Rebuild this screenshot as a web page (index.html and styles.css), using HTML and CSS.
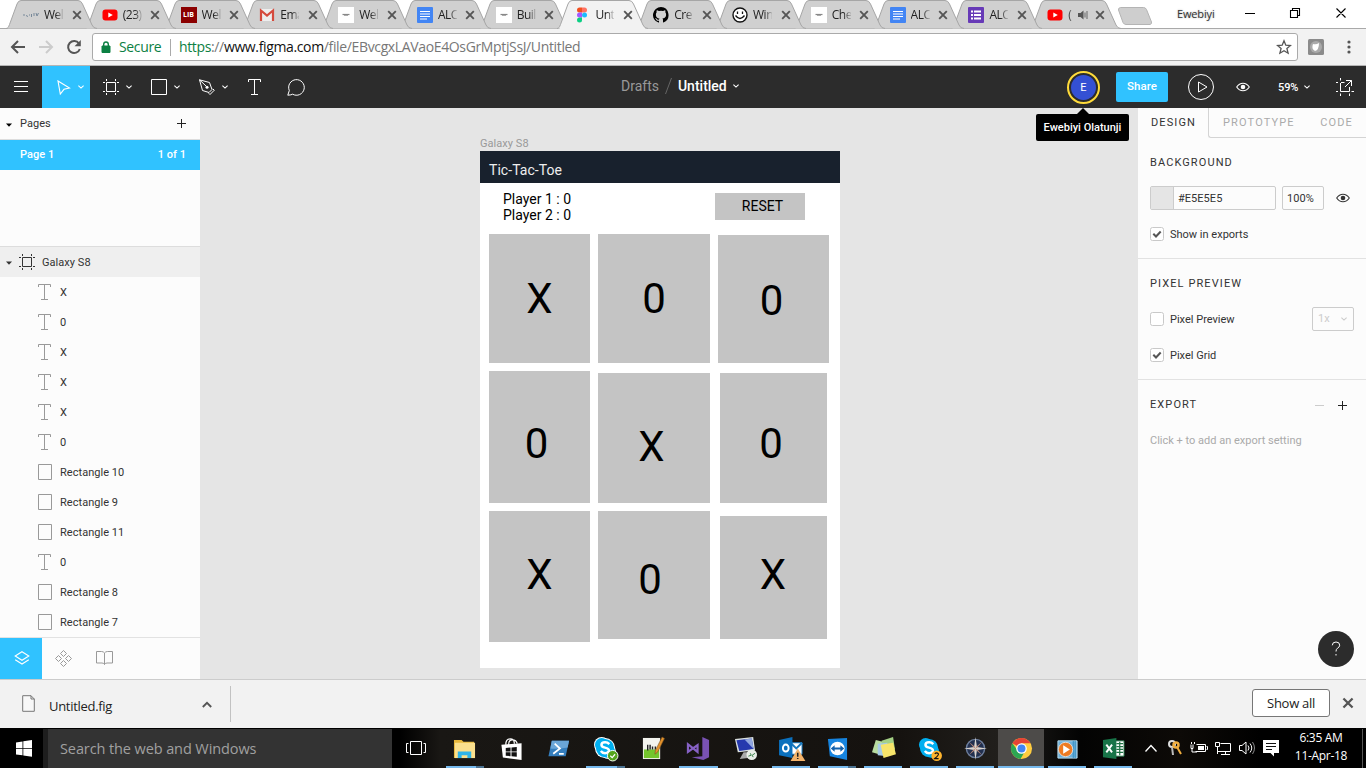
FILE: index.html
```
<!DOCTYPE html>
<html lang="en">
<head>
<meta charset="utf-8">
<title>Untitled</title>
<link rel="stylesheet" href="styles.css">
</head>
<body>
<svg class="defs" width="0" height="0">
  <symbol id="tab" viewBox="0 0 92 29"><path d="M0 28.5C2 28.5 2.500 27 3.500 24.500L11 4Q12.300.5 15 .5H72Q75 .5 76.500 4L86 25Q87.500 28.500 91 28.500"/></symbol>
  <symbol id="x" viewBox="0 0 10 10"><path d="M1.200 1.200l7.600 7.600M8.800 1.200L1.200 8.800" fill="none" stroke="#555" stroke-width="1.900"/></symbol>
  <symbol id="yt" viewBox="0 0 16 16"><rect x=".5" y="2.500" width="15" height="11" rx="3" fill="#f00"/><path d="M6.300 5.500l4.500 2.500-4.500 2.500z" fill="#fff"/></symbol>
  <symbol id="docs" viewBox="0 0 16 16"><rect width="16" height="16" rx="1" fill="#4285f4"/><path d="M3 4.500h10M3 7h10M3 9.500h10M3 12h7" stroke="#fff" stroke-width="1.200"/></symbol>
  <symbol id="forms" viewBox="0 0 16 16"><rect width="16" height="16" rx="1" fill="#673ab7"/><path d="M3 4.500h2M3 8h2M3 11.500h2M6 4.500h7M6 8h7M6 11.500h7" stroke="#fff" stroke-width="2"/></symbol>
  <symbol id="page" viewBox="0 0 16 16"><rect width="16" height="16" fill="#fff"/><path d="M4.500 7.500h7" stroke="#888" stroke-width="1.200"/><path d="M6 8.500h4" stroke="#aaa" stroke-width="1"/></symbol>
  <symbol id="chev" viewBox="0 0 6 4"><path d="M.4.600L3 3.100 5.600.600" fill="none" stroke="currentColor" stroke-width="1.100"/></symbol>
  <symbol id="frame" viewBox="0 0 16 16"><path d="M3.500 3.500h9v9h-9zM3.500 0v2M12.500 0v2M3.500 14v2M12.500 14v2M0 3.500h2M0 12.500h2M14 3.500h2M14 12.500h2" fill="none" stroke="currentColor"/></symbol>
  <symbol id="type" viewBox="0 0 13 16"><path d="M.5 3V.500h12V3M6.500.500v15M3 15.500h7" fill="none" stroke="currentColor"/></symbol>
  <symbol id="rect" viewBox="0 0 14 16"><path d="M.5.500h13v15H.500z" fill="none" stroke="currentColor"/></symbol>
  <symbol id="eye" viewBox="0 0 14 10"><path d="M.7 5Q3.200 1.200 7 1.200T13.300 5Q10.800 8.800 7 8.800T.700 5z" fill="none" stroke="currentColor" stroke-width="1.100"/><circle cx="7" cy="5" r="2.300" fill="currentColor"/></symbol>
  <symbol id="check" viewBox="0 0 14 14"><rect x=".5" y=".5" width="13" height="13" rx="2" fill="#fff" stroke="#c9c9c9"/><path d="M3.300 6.700L6 9.500l4.700-5" fill="none" stroke="#555" stroke-width="2"/></symbol>
  <symbol id="uncheck" viewBox="0 0 14 14"><rect x=".5" y=".5" width="13" height="13" rx="2" fill="#fff" stroke="#c9c9c9"/></symbol>
  <symbol id="plus" viewBox="0 0 9 9"><path d="M4.500 0v9M0 4.500h9" stroke="#222" stroke-width="1"/></symbol>
  <symbol id="skype" viewBox="0 0 24 24"><circle cx="8" cy="8" r="7" fill="#00aff0"/><circle cx="15" cy="15" r="7" fill="#00aff0"/><circle cx="11.500" cy="11.500" r="9.500" fill="#00aff0"/><path d="M16 7.500Q14 5.500 11.500 5.600 7.800 5.700 7.800 8.300q0 2 3.700 2.800 4.300.9 4.100 3.200-.3 2.600-4 2.600-2.800 0-4.500-2.300" fill="none" stroke="#fff" stroke-width="2.600"/></symbol>
</svg>

<header class="tabstrip">
  <div class="tabs">
    <div class="tab"><svg class="shape"><use href="#tab"/></svg><svg class="fav" viewBox="0 0 16 16"><path d="M1 7v2M3 8.500l2 1M6 8h1M8.500 7v3M11 6v3M13 6l1 3 1.500-3" stroke="#789" fill="none"/></svg><span>Wel</span><svg class="close"><use href="#x"/></svg></div>
    <div class="tab"><svg class="shape"><use href="#tab"/></svg><svg class="fav"><use href="#yt"/></svg><span>(23)</span><svg class="close"><use href="#x"/></svg></div>
    <div class="tab"><svg class="shape"><use href="#tab"/></svg><i class="fav lib">LIB</i><span>Wel</span><svg class="close"><use href="#x"/></svg></div>
    <div class="tab"><svg class="shape"><use href="#tab"/></svg><svg class="fav" viewBox="0 0 16 16"><path d="M1 2h14v12H1z" fill="#eee"/><path d="M2 14V3.500l6 5 6-5V14" fill="none" stroke="#d54b3d" stroke-width="2.200"/></svg><span>Ema</span><svg class="close"><use href="#x"/></svg></div>
    <div class="tab"><svg class="shape"><use href="#tab"/></svg><svg class="fav"><use href="#page"/></svg><span>Wel</span><svg class="close"><use href="#x"/></svg></div>
    <div class="tab"><svg class="shape"><use href="#tab"/></svg><svg class="fav"><use href="#docs"/></svg><span>ALC</span><svg class="close"><use href="#x"/></svg></div>
    <div class="tab"><svg class="shape"><use href="#tab"/></svg><svg class="fav"><use href="#page"/></svg><span>Buil</span><svg class="close"><use href="#x"/></svg></div>
    <div class="tab active"><svg class="shape"><use href="#tab"/></svg><svg class="fav" viewBox="0 0 16 16"><path d="M8 .5H5.500a2.500 2.500 0 0 0 0 5H8z" fill="#f24e1e"/><path d="M8 .5h2.500a2.500 2.500 0 0 1 0 5H8z" fill="#ff7262"/><path d="M8 5.500H5.500a2.500 2.500 0 0 0 0 5H8z" fill="#a259ff"/><circle cx="10.500" cy="8" r="2.500" fill="#1abcfe"/><path d="M8 10.500H5.500A2.500 2.500 0 1 0 8 13z" fill="#0acf83"/></svg><span>Unt</span><svg class="close"><use href="#x"/></svg></div>
    <div class="tab"><svg class="shape"><use href="#tab"/></svg><svg class="fav" viewBox="0 0 16 16"><path d="M8 0a8 8 0 0 0-2.500 15.600c.4.100.5-.2.500-.4v-1.500c-2.200.5-2.700-1-2.700-1-.4-.9-.9-1.200-.9-1.200-.7-.5.100-.5.100-.5.800.1 1.200.8 1.200.8.700 1.300 1.900.9 2.300.7.100-.5.300-.9.500-1.100-1.800-.2-3.600-.9-3.600-4 0-.9.300-1.600.8-2.100-.1-.2-.4-1 .1-2.100 0 0 .7-.2 2.200.8a7.600 7.600 0 0 1 4 0c1.500-1 2.200-.8 2.200-.8.400 1.100.2 1.900.1 2.100.5.600.8 1.300.8 2.100 0 3.100-1.900 3.700-3.700 3.900.3.300.6.800.6 1.500v2.200c0 .2.100.5.500.4A8 8 0 0 0 8 0z"/></svg><span>Cre</span><svg class="close"><use href="#x"/></svg></div>
    <div class="tab"><svg class="shape"><use href="#tab"/></svg><svg class="fav" viewBox="0 0 16 16"><circle cx="8" cy="8" r="7" fill="#fff" stroke="#111" stroke-width="1.400"/><path d="M5.500 4.500v2.500M10.500 4.500v2.500M3.500 8.500q4.500 6 9 0" fill="none" stroke="#111" stroke-width="1.300"/></svg><span>Win</span><svg class="close"><use href="#x"/></svg></div>
    <div class="tab"><svg class="shape"><use href="#tab"/></svg><svg class="fav"><use href="#page"/></svg><span>Che</span><svg class="close"><use href="#x"/></svg></div>
    <div class="tab"><svg class="shape"><use href="#tab"/></svg><svg class="fav"><use href="#docs"/></svg><span>ALC</span><svg class="close"><use href="#x"/></svg></div>
    <div class="tab"><svg class="shape"><use href="#tab"/></svg><svg class="fav"><use href="#forms"/></svg><span>ALC</span><svg class="close"><use href="#x"/></svg></div>
    <div class="tab audio"><svg class="shape"><use href="#tab"/></svg><svg class="fav"><use href="#yt"/></svg><span>(</span><svg class="speaker" viewBox="0 0 10 10"><path d="M0 3h2.500L5.500.500v9L2.500 7H0z" fill="#555"/><path d="M7 2.500v5M9 1v8" stroke="#666"/></svg><svg class="close"><use href="#x"/></svg></div>
  </div>
  <svg class="newtab" viewBox="0 0 34 18"><path d="M2.500.500h23q2 0 3 2l5 12.500q.5 2-1.500 2.500H8q-2 0-3-2L.500 3Q0 1 2.500.500z" fill="#cecece" stroke="#b4b4b4"/></svg>
  <span class="profile">Ewebiyi</span>
  <svg class="wincontrols" viewBox="0 0 102 12"><path d="M0 6.500h10M45.500 3.500h7v7h-7zM47.500 3.500v-2h7v7h-2M91.500 1.500l9 9M100.500 1.500l-9 9" fill="none" stroke="#000" stroke-width="1.100"/></svg>
</header>

<nav class="browserbar">
  <svg class="navicons" viewBox="0 0 92 36"><path d="M25 18H12.500M18 12l-6 6 6 6" fill="none" stroke="#555" stroke-width="2"/><path d="M39 18h12.500M46 12l6 6-6 6" fill="none" stroke="#ccc" stroke-width="2"/><path d="M79 14.500A6 6 0 1 0 79.800 20" fill="none" stroke="#555" stroke-width="2"/><path d="M80.800 11v6.300h-6.300z" fill="#555"/></svg>
  <div class="address">
    <svg class="lock" viewBox="0 0 10 12"><path d="M1 5h8v6.500H1z" fill="#0b8043" stroke="#0b8043"/><path d="M2.700 5V3.300a2.300 2.300 0 0 1 4.600 0V5" fill="none" stroke="#0b8043" stroke-width="1.400"/></svg>
    <span class="secure">Secure</span><span class="url"><b>https</b>://<em>www.figma.com</em>/file/EBvcgxLAVaoE4OsGrMptjSsJ/Untitled</span>
    <svg class="star" viewBox="0 0 16 16"><path d="M8 1.800l1.800 4.400 4.700.3-3.600 3 1.200 4.700L8 11.700l-4.100 2.500 1.200-4.700-3.600-3 4.700-.3z" fill="none" stroke="#555" stroke-width="1.300"/></svg>
  </div>
  <svg class="ext" viewBox="0 0 16 16"><rect width="16" height="16" rx="1.500" fill="#8b8b8b"/><circle cx="8" cy="8" r="6" fill="#aaa"/><path d="M5 5q3 1 6-1 0 7-4 8-4-2-2-7z" fill="#fff"/></svg>
  <svg class="dots" viewBox="0 0 4 14"><circle cx="2" cy="2" r="1.600"/><circle cx="2" cy="7" r="1.600"/><circle cx="2" cy="12" r="1.600"/></svg>
</nav>

<div class="appbar">
  <div class="tool menu"><svg width="14" height="12"><path d="M0 .500h14M0 5.500h14M0 10.500h14" stroke="#fff"/></svg></div>
  <div class="tool selected"><svg width="14" height="15" viewBox="0 0 14 15"><path d="M1 1l11.500 7-5.500 1.300L3.300 14z" fill="none" stroke="#fff" stroke-width="1.100"/></svg><svg class="chev"><use href="#chev"/></svg></div>
  <div class="tool"><svg width="16" height="16"><use href="#frame"/></svg><svg class="chev"><use href="#chev"/></svg></div>
  <div class="tool"><svg width="16" height="16"><path d="M.5.500h15v15H.500z" fill="none" stroke="#fff"/></svg><svg class="chev"><use href="#chev"/></svg></div>
  <div class="tool"><svg width="16" height="16" viewBox="0 0 16 16"><path d="M.5.800l10 2.700 2.500 7-3 3-6.500-2zM.5.800L7 7M9.700 14.200l1.300 1.300 4.300-4.300-1.500-1.300" fill="none" stroke="#fff"/><circle cx="8" cy="8.200" r="1.500" fill="#fff"/></svg><svg class="chev"><use href="#chev"/></svg></div>
  <div class="tool single"><svg width="13" height="16"><use href="#type"/></svg></div>
  <div class="tool comment"><svg width="18" height="17" viewBox="0 0 18 17"><path d="M.8 16.200L2.300 11.500A7.800 7.800 0 1 1 5.600 15.200Q4.500 16 .8 16.200z" fill="none" stroke="#fff"/></svg></div>
  <div class="doctitle"><span>Drafts</span><svg width="7" height="16"><path d="M6.500 0L.500 16" stroke="#666"/></svg><strong>Untitled</strong><svg class="chev"><use href="#chev"/></svg></div>
  <div class="actions">
    <div class="avatar"><i>E</i><div class="tooltip">Ewebiyi Olatunji</div></div>
    <div class="share">Share</div>
    <svg class="play" viewBox="0 0 26 26"><circle cx="13" cy="13" r="12.500" fill="none" stroke="#fff"/><path d="M10.500 8v10l8.500-5z" fill="none" stroke="#fff"/></svg>
    <svg class="eye"><use href="#eye"/></svg>
    <span class="zoom">59%</span><svg class="chev"><use href="#chev"/></svg>
    <svg class="prefs" viewBox="0 0 18 18"><path d="M4.500 0v2.500M0 4.500h2M5 4.500h3.500M4.500 5v8.500h9V9M0 13.500h2M4.500 15.500v2.500M13.500 15.500v2.500M15.500 13.500h2.500M9 9l6.500-6.500M10 2.500h5.500V8" fill="none" stroke="#fff"/></svg>
  </div>
</div>

<main class="workspace">
  <aside class="left">
    <div class="pageshead"><svg class="tri" viewBox="0 0 6 4"><path d="M0 .500h6L3 3.700z"/></svg><span>Pages</span><svg class="plus"><use href="#plus"/></svg></div>
    <div class="pagerow"><span>Page 1</span><span>1 of 1</span></div>
    <div class="layers">
      <div class="layer top"><svg class="tri" viewBox="0 0 6 4"><path d="M0 .500h6L3 3.700z" fill="#333"/></svg><svg width="16" height="16"><use href="#frame"/></svg><span>Galaxy S8</span></div>
      <div class="layer"><svg class="t"><use href="#type"/></svg><span>X</span></div>
      <div class="layer"><svg class="t"><use href="#type"/></svg><span>0</span></div>
      <div class="layer"><svg class="t"><use href="#type"/></svg><span>X</span></div>
      <div class="layer"><svg class="t"><use href="#type"/></svg><span>X</span></div>
      <div class="layer"><svg class="t"><use href="#type"/></svg><span>X</span></div>
      <div class="layer"><svg class="t"><use href="#type"/></svg><span>0</span></div>
      <div class="layer"><svg class="r"><use href="#rect"/></svg><span>Rectangle 10</span></div>
      <div class="layer"><svg class="r"><use href="#rect"/></svg><span>Rectangle 9</span></div>
      <div class="layer"><svg class="r"><use href="#rect"/></svg><span>Rectangle 11</span></div>
      <div class="layer"><svg class="t"><use href="#type"/></svg><span>0</span></div>
      <div class="layer"><svg class="r"><use href="#rect"/></svg><span>Rectangle 8</span></div>
      <div class="layer"><svg class="r"><use href="#rect"/></svg><span>Rectangle 7</span></div>
    </div>
    <div class="panelnav">
      <div class="on"><svg width="16" height="14" viewBox="0 0 16 14"><path d="M8 .700l6.800 4.300L8 9.300 1.200 5zM1.200 8.700L8 13l6.800-4.300" fill="none" stroke="#fff" stroke-width="1.100"/></svg></div>
      <div><svg width="17" height="17" viewBox="0 0 17 17"><path d="M8.500.500l3 3-3 3-3-3zM8.500 10.500l3 3-3 3-3-3zM3.500 5.500l3 3-3 3-3-3zM13.500 5.500l3 3-3 3-3-3z" fill="none" stroke="#999"/></svg></div>
      <div class="book"><svg width="17" height="14" viewBox="0 0 17 14"><path d="M8.500 2Q7.500.500 5.500.500h-5v11.500h5.500Q8 12 8.500 13.500 9 12 11 12h5.500V.500h-5Q9.500.500 8.500 2zV13.500" fill="none" stroke="#999"/></svg></div>
    </div>
  </aside>

  <section class="canvas">
    <span class="framelabel">Galaxy S8</span>
    <div class="artboard">
      <div class="titlebar">Tic-Tac-Toe</div>
      <div class="scores">Player 1 : 0<br>Player 2 : 0</div>
      <div class="reset">RESET</div>
      <div class="cell c1"><b>X</b></div><div class="cell c2"><b>0</b></div><div class="cell c3"><b>0</b></div>
      <div class="cell c4"><b>0</b></div><div class="cell c5"><b>X</b></div><div class="cell c6"><b>0</b></div>
      <div class="cell c7"><b>X</b></div><div class="cell c8"><b>0</b></div><div class="cell c9"><b>X</b></div>
    </div>
  </section>

  <aside class="right">
    <div class="ptabs"><span class="design">DESIGN</span><div class="others"><span>PROTOTYPE</span><span>CODE</span></div></div>
    <div class="group g1">
      <h2>BACKGROUND</h2>
      <div class="colorrow"><div class="color"><i></i><span>#E5E5E5</span></div><div class="pct">100%</div><svg class="eye"><use href="#eye"/></svg></div>
      <div class="option"><svg><use href="#check"/></svg><span>Show in exports</span></div>
    </div>
    <div class="group g2">
      <h2>PIXEL PREVIEW</h2>
      <div class="option"><svg><use href="#uncheck"/></svg><span>Pixel Preview</span><div class="select">1x<svg class="chev"><use href="#chev"/></svg></div></div>
      <div class="option grid"><svg><use href="#check"/></svg><span>Pixel Grid</span></div>
    </div>
    <div class="group g3">
      <div class="exporthead"><h2>EXPORT</h2><svg width="32" height="9"><path d="M0 4.500h9" stroke="#ccc"/><path d="M27.500 0v9M23 4.500h9" stroke="#222"/></svg></div>
      <p>Click + to add an export setting</p>
    </div>
    <div class="help"><svg width="10" height="16" viewBox="0 0 10 16"><path d="M1.300 4.300Q1.300 1 5 1t3.700 3.200Q8.700 6 6.500 7.200 5 8.200 5 10.500M5 13v1.500" fill="none" stroke="#fff"/></svg></div>
  </aside>
</main>

<footer class="downloads">
  <svg class="doc" viewBox="0 0 13 17"><path d="M.7.700H9l3.300 3.300v12.300H.700zM9 .700V4h3.300" fill="#f8f8f8" stroke="#777"/></svg>
  <span class="filename">Untitled.fig</span>
  <svg class="up" viewBox="0 0 10 7"><path d="M.8 6L5 1.800 9.200 6" fill="none" stroke="#555" stroke-width="1.900"/></svg>
  <i class="divider"></i>
  <div class="showall">Show all</div>
  <svg class="closebar"><use href="#x"/></svg>
</footer>

<div class="taskbar">
  <div class="start"><svg width="16" height="17" viewBox="0 0 16 17"><path d="M0 2.500l6.500-1v6.500H0zM7.300 1.300L16 0v8H7.300zM0 8.800h6.500v6.400L0 14.400zM7.300 8.800H16v8l-8.700-1.300z" fill="#fff"/></svg></div>
  <div class="search">Search the web and Windows</div>
  <div class="apps">
    <div class="app"><svg viewBox="0 0 24 24"><path d="M6.500 5.500h11v13h-11zM4.500 7.500h-2v9h2M19.500 7.500h2v9h-2" fill="none" stroke="#fff"/></svg></div>
    <div class="app run group2"><svg viewBox="0 0 24 24"><path d="M1 3h8l2 2h11v17H1z" fill="#e8b83c"/><path d="M2 6h21v16H2z" fill="#fbe08d"/><path d="M5 22v-7h14v7h-4v-3H9v3z" fill="#2fb4e8"/></svg></div>
    <div class="app"><svg viewBox="0 0 24 24"><path d="M1.500 8l21-1.500V24L3 21.500z" fill="#fff"/><path d="M6 8q0-6 4.500-6T15 7M9 8q0-5 4-5t5 4" fill="none" stroke="#fff" stroke-width="1.300"/><path d="M6 11.500l5-.5v4H6zM12 11l5.500-.5V15H12zM6 16h5v4l-5-.5zM12 16h5.500v4.500L12 20z" fill="#111"/></svg></div>
    <div class="app"><svg viewBox="0 0 24 24"><path d="M5 4h18l-3.500 16H1.500z" fill="#357ebd"/><path d="M5 4h18l-1.500 7Q10 13 3.500 12z" fill="#6aa6d8"/><path d="M8 7l5.500 5L6.500 17.500M12.500 17.500h5" fill="none" stroke="#fff" stroke-width="1.800"/></svg></div>
    <div class="app run group2"><svg viewBox="0 0 24 24"><circle cx="8" cy="8" r="8" fill="#fff"/><circle cx="15" cy="15" r="8" fill="#fff"/><circle cx="11.500" cy="11.500" r="10.500" fill="#fff"/><use href="#skype"/><circle cx="19.500" cy="19.500" r="5.500" fill="#55a51c" stroke="#fff"/><path d="M17 19.500l2 2 3-3.500" fill="none" stroke="#fff" stroke-width="1.300"/></svg></div>
    <div class="app"><svg viewBox="0 0 24 24"><path d="M2 1h18v22H2z" fill="#f4f4ee"/><path d="M3 13h16v9H3z" fill="#74c52b"/><path d="M7 14V8M9.500 8v5M12 13v-3M15 13v-3" fill="none" stroke="#222" stroke-width="1.500"/><path d="M22 0l2.500 1.500-7 14-3 2.500.5-4z" fill="#e3912c" stroke="#76501e" stroke-width=".6"/></svg></div>
    <div class="app run"><svg viewBox="0 0 24 24"><path d="M16 0l7 3v18l-6 3-12-3 11-1z" fill="#7952b3"/><path d="M1 7.500v8l10-7v7z" fill="none" stroke="#8661c5" stroke-width="2.300"/></svg></div>
    <div class="app"><svg viewBox="0 0 24 24"><path d="M1 2l19-2 2 14-18 2z" fill="#d9dfdf"/><path d="M2.500 3.500l16-2 2 11-15 2z" fill="#2639ae"/><path d="M11 2.500l7.500-1 2 11z" fill="#91a7df"/><path d="M10 16h7l4 5-15 2z" fill="#aaa"/><circle cx="18.500" cy="18.500" r="5.500" fill="#e9eee8"/><path d="M15 20l3-1-1-2M22 17l-3 2 1 2" stroke="#368047" fill="none"/></svg></div>
    <div class="app run"><svg viewBox="0 0 24 24"><path d="M12 6h11v12H12z" fill="#fff" stroke="#1678be"/><path d="M12 7l5 5 6-6" fill="none" stroke="#1678be" stroke-width="2"/><path d="M-1 3l14-3v22L-1 19z" fill="#0b70bd"/><ellipse cx="6" cy="11.500" rx="3" ry="3.700" fill="none" stroke="#fff" stroke-width="2"/><path d="M18.500 12l8 13H11z" fill="#f3b36b"/><path d="M18.500 16.500v4M18.500 22v1" stroke="#222" stroke-width="1.600"/></svg></div>
    <div class="app run group2"><svg viewBox="0 0 24 24"><path d="M2 2l20-1v23L4 20z" fill="#1684df"/><ellipse cx="12" cy="12" rx="7.500" ry="7" fill="#fff"/><path d="M5 12l4-3.500V11h6V8.500l4 3.500-4 3.500V13H9v2.500z" fill="#1261ad"/></svg></div>
    <div class="app run"><svg viewBox="0 0 24 24"><path d="M4 3l11 3-4 13-11-3z" fill="#b8dca0"/><path d="M10 4l12-4 2 13-13 4z" fill="#a4d085"/><path d="M6 7l10-1 1 14-11-1z" fill="#a6cbe9"/><path d="M9 8l13-2 3 12-13 4z" fill="#f7e46a"/></svg></div>
    <div class="app run"><svg viewBox="0 0 24 24"><use href="#skype"/><circle cx="19.500" cy="19.500" r="5.500" fill="#ffb52e"/><path d="M17.500 17.500q2-2 3.800 0 .5 1.500-3.800 5h4" fill="none" stroke="#111" stroke-width="1.200"/></svg></div>
    <div class="app run"><svg viewBox="0 0 24 24"><circle cx="12" cy="12" r="9.500" fill="#22304f" stroke="#6c7e9d" stroke-width="1.500"/><path d="M12 0l1.500 10.500L24 12l-10.500 1.500L12 24l-1.500-10.500L0 12l10.500-1.500z" fill="#d9d4cf"/><path d="M5 5l6 5 1 2-2-1zM19 5l-5 6-2 1 1-2zM5 19l5-6 2-1-1 2zM19 19l-6-5-1-2 2 1z" fill="#ba8a79"/></svg></div>
    <div class="app run current"><svg viewBox="0 0 24 24"><circle cx="12" cy="12" r="11" fill="#ffcd40"/><path d="M12 12L2.500 6.500A11 11 0 0 1 21.500 6.500H12z" fill="#e64335"/><path d="M2.500 6.500A11 11 0 0 0 11 23l5-9-4 2-4-2z" fill="#2ca653"/><circle cx="12" cy="12" r="5.500" fill="#fff"/><circle cx="12" cy="12" r="4.200" fill="#4285f4"/></svg></div>
    <div class="app run"><svg viewBox="0 0 24 24"><path d="M2 4h20v18H2z" fill="#6eb1da" stroke="#b8dff1"/><path d="M18 4v18M20 4v18" stroke="#328cc0"/><circle cx="10" cy="13" r="7.500" fill="#ee7b22" stroke="#ddd"/><path d="M7.500 8.500v9l7-4.500z" fill="#fff"/></svg></div>
    <div class="app run"><svg viewBox="0 0 24 24"><path d="M13 4h10v16H13z" fill="#fff" stroke="#217346"/><path d="M15 7h7M15 10h7M15 13h7M15 16h7M18.500 5v14" stroke="#217346" stroke-width="1.300"/><path d="M1 3l14-2v22L1 21z" fill="#187448"/><path d="M4.500 8l6 8M10.500 8l-6 8" stroke="#fff" stroke-width="2"/></svg></div>
  </div>
  <svg class="tray" viewBox="0 0 140 24"><path d="M5.500 15.500l5.500-6 5.500 6" fill="none" stroke="#fff" stroke-width="1.300"/><g fill="none"><circle cx="32" cy="8" r="3" stroke="#ddd" stroke-width="2"/><path d="M32 11l1 8" stroke="#bbb" stroke-width="2"/><circle cx="36" cy="9" r="2.500" stroke="#f0ad3e" stroke-width="2.500"/><path d="M37 11l4 7" stroke="#f0ad3e" stroke-width="2"/><path d="M56.500 8.500h9v7h-10M53 8.500v4h-2v-4M52 13v3h5M51.500 6v2M54.500 6v2M66.500 10.500h1v3h-1" stroke="#fff"/><path d="M80.500 7.500h10v8h-13M85.500 15.500v3M81 18.500h9M75.500 6.500h4v4h-4zM77.500 10v8" stroke="#fff"/><path d="M99.500 9.500h2.500l4-3.500v12l-4-3.500h-2.500zM108 9.500q2 2.500 0 5M110 7.500q3.500 4.500 0 9" stroke="#fff"/><path d="M112.500 6q4 6 0 12" stroke="#888"/></g><path d="M58 10h6v4h-6z" fill="#fff"/><path d="M123 4h16v13h-5v3.500L130.500 17H123z" fill="#fff"/><path d="M126 7.500h10M126 10.500h10M126 13.500h6" stroke="#111" stroke-width="1.200"/></svg>
  <div class="clock">6:35 AM<br>11-Apr-18</div>
</div>
</body>
</html>
```
FILE: styles.css
```
* { box-sizing: border-box; }
body { margin: 0; width: 1366px; height: 768px; overflow: hidden; display: flex; flex-direction: column; background: #fff; font: 11px/16px Roboto, sans-serif; color: #333; letter-spacing: .04px; font-variant-ligatures: none; }
svg { display: block; flex: none; }
svg.defs { position: absolute; }
.chev { width: 6px; height: 4px; }

.tabstrip { height: 29px; flex: none; display: flex; background: #fff; border-bottom: 1px solid #a9a9a9; font: 12px/16px "Open Sans", sans-serif; letter-spacing: -.5px; color: #222; }
.tabs { display: flex; padding-left: 6px; width: 1118px; height: 29px; }
.tab { position: relative; width: 92px; margin-right: -13.230px; height: 29px; flex: none; display: flex; align-items: center; padding: 0 0 0 17px; z-index: 1; }
.tab:nth-child(1) { z-index: 14; } .tab:nth-child(2) { z-index: 13; } .tab:nth-child(3) { z-index: 12; } .tab:nth-child(4) { z-index: 11; }
.tab:nth-child(5) { z-index: 10; } .tab:nth-child(6) { z-index: 9; } .tab:nth-child(7) { z-index: 8; } .tab:nth-child(9) { z-index: 6; }
.tab:nth-child(10) { z-index: 5; } .tab:nth-child(11) { z-index: 4; } .tab:nth-child(12) { z-index: 3; } .tab:nth-child(13) { z-index: 2; }
.tab .shape { position: absolute; left: 0; top: 0; width: 92px; height: 29px; fill: #d0d0d0; stroke: #a6a6a6; z-index: -1; }
.tab.active { z-index: 20; }
.tab.active .shape { fill: #f2f2f2; }
.tab.active::after { content: ""; position: absolute; left: 3px; right: 4px; bottom: 0; height: 1px; background: #f2f2f2; }
.fav { width: 16px; height: 16px; }
.tab span { width: 19px; margin-left: 5px; overflow: hidden; white-space: nowrap; -webkit-mask-image: linear-gradient(90deg, #000 60%, rgba(0,0,0,.15)); }
.close { width: 10px; height: 10px; margin-left: 8.500px; }
.lib { background: #8b0000; color: #fff; font: bold 7px/16px "Open Sans", sans-serif; letter-spacing: 0; text-align: center; }
.tab.audio span { width: 5px; -webkit-mask-image: linear-gradient(90deg, #000, rgba(0,0,0,.3)); }
.speaker { width: 10px; height: 10px; margin-left: 5px; }
.tab.audio .close { margin-left: 7px; }
.newtab { width: 34px; height: 18px; margin-top: 7px; }
.profile { margin: 6px 0 0 25px; width: 66px; font-size: 11px; letter-spacing: -.15px; color: #333; text-shadow: 0 0 2px #aaa; }
.wincontrols { width: 102px; height: 12px; margin: 7px 0 0 2px; }

.browserbar { height: 37px; flex: none; display: flex; align-items: center; background: #f2f2f2; border-bottom: 1px solid #b5b5b5; }
.navicons { width: 92px; height: 36px; }
.address { width: 1206px; height: 28px; display: flex; align-items: center; background: #fff; border: 1px solid #aaa; border-radius: 3px; padding: 0 5px 0 8px; font: 14px/20px "Open Sans", sans-serif; letter-spacing: -.36px; color: #777; }
.lock { width: 10px; height: 12px; margin-top: -1px; }
.secure { color: #0b8043; margin-left: 8px; width: 52px; border-right: 1px solid #aaa; height: 17px; line-height: 16px; }
.url { margin-left: 8px; flex: 1; }
.url b { color: #0b8043; font-weight: 400; }
.url em { color: #111; font-style: normal; }
.star { width: 16px; height: 16px; }
.ext { width: 16px; height: 16px; margin-left: 10px; }
.dots { width: 4px; height: 14px; margin-left: 23px; fill: #555; }

.appbar { height: 42px; flex: none; display: flex; background: #2c2c2c; color: #fff; }
.tool { width: 48px; display: flex; align-items: center; padding-left: 13px; gap: 7px; }
.tool.menu { width: 42px; padding-left: 14px; }
.tool.selected { background: #30c2ff; padding-left: 15px; gap: 7px; }
.tool.single { width: 42px; padding-left: 14px; }
.tool.comment { width: 38px; padding-left: 11px; }
.doctitle { margin-left: 307px; display: flex; align-items: center; gap: 6px; font-size: 14px; padding-bottom: 2px; width: 400px; letter-spacing: 0; }
.doctitle span { color: #999; }
.doctitle strong { font-weight: 500; }
.actions { display: flex; align-items: center; margin-left: 46px; }
.avatar { position: relative; width: 33px; height: 33px; margin-right: -1px; border: 2.500px solid #ffdb3a; border-radius: 50%; padding: 2px; }
.avatar i { display: block; width: 25px; height: 25px; border-radius: 50%; background: #3450d4; font: 11px/25px Roboto, sans-serif; text-align: center; }
.tooltip { position: absolute; left: -33px; top: 41px; width: 93px; height: 27px; border-radius: 2px; background: #000; font-weight: 500; line-height: 27px; letter-spacing: 0; text-align: center; white-space: nowrap; z-index: 30; }
.tooltip::before { content: ""; position: absolute; left: 41px; top: -6px; border: 6px solid transparent; border-top: 0; border-bottom-color: #000; }
.share { width: 52px; height: 30px; margin-left: 17px; border-radius: 2px; background: #30c2ff; font-weight: 500; line-height: 29px; text-align: center; font-size: 11.500px; }
.play { width: 26px; height: 26px; margin-left: 20px; }
.eye { width: 14px; height: 10px; }
.actions .eye { margin-left: 22px; }
.zoom { margin: 1px 6px 0 28px; width: 20px; font-weight: 500; letter-spacing: -.1px; }
.prefs { width: 18px; height: 18px; margin-left: 26px; }

.workspace { height: 571px; flex: none; display: flex; background: #e5e5e5; }
.left { width: 200px; background: #fcfcfc; display: flex; flex-direction: column; }
.pageshead { height: 32px; display: flex; align-items: center; padding: 0 14px 0 6px; border-bottom: 1px solid #ddd; }
.pageshead span { margin-left: 8px; flex: 1; }
.tri { width: 6px; height: 4px; margin-top: 2px; }
.plus { width: 9px; height: 9px; }
.pagerow { height: 30px; display: flex; justify-content: space-between; padding: 0 14px 0 20px; align-items: center; background: #30c2ff; color: #fff; font-weight: 500; }
.layers { margin-top: 76px; border-top: 1px solid #ddd; }
.layer { height: 30px; display: flex; align-items: center; padding-left: 38px; }
.layer span { padding-top: 1.500px; }
.layer.top { background: #efefef; padding-left: 6px; }
.layer.top span { margin-left: 7px; }
.layer.top .tri + svg { margin-left: 7px; color: #333; }
.layer .t { width: 13px; height: 16px; margin-right: 9px; color: #999; }
.layer .r { width: 14px; height: 16px; margin-right: 8px; color: #999; }
.panelnav { height: 42px; display: flex; border-top: 1px solid #e2e2e2; background: #fcfcfc; margin-top: auto; }
.panelnav div { width: 42px; display: flex; align-items: center; justify-content: center; padding-bottom: 1px; }
.panelnav .book { padding-right: 2px; }
.panelnav .on { background: #30c2ff; padding-left: 1px; }

.canvas { position: relative; width: 938px; }
.framelabel { position: absolute; left: 280px; top: 28px; color: #999; }
.artboard { position: absolute; left: 280px; top: 43px; width: 360px; height: 517px; background: #fff; color: #000; letter-spacing: 0; }
.titlebar { height: 32px; background: #18212d; color: #eee; font-size: 14px; line-height: 38px; padding-left: 9px; letter-spacing: .05px; }
.scores { position: absolute; left: 23px; top: 40px; font-size: 14px; line-height: 16.400px; }
.reset { position: absolute; left: 235px; top: 42px; width: 90px; height: 27px; background: #c4c4c4; font-size: 14px; line-height: 27px; text-align: center; padding-left: 5px; }
.cell { position: absolute; background: #c4c4c4; display: flex; justify-content: center; font-size: 42px; line-height: 42px; }
.cell b { font-weight: 400; }
.c1 { left: 9px; top: 83px; width: 101px; height: 129px; padding-top: 44px; }
.c2 { left: 118px; top: 83px; width: 112px; height: 129px; padding-top: 43.500px; }
.c3 { left: 238px; top: 84px; width: 111px; height: 128px; padding: 45px 4px 0 0; }
.c4 { left: 9px; top: 220px; width: 101px; height: 132px; padding: 52px 6px 0 0; }
.c5 { left: 118px; top: 222px; width: 112px; height: 130px; padding: 53px 5px 0 0; }
.c6 { left: 240px; top: 222px; width: 107px; height: 130px; padding: 50px 5px 0 0; }
.c7 { left: 9px; top: 360px; width: 101px; height: 131px; padding-top: 43px; }
.c8 { left: 118px; top: 360px; width: 112px; height: 128px; padding: 48px 8px 0 0; }
.c9 { left: 240px; top: 365px; width: 107px; height: 123px; padding: 38px 1px 0 0; }

.right { position: relative; width: 228px; background: #fcfcfc; }
.ptabs { height: 30px; display: flex; letter-spacing: 1.100px; font-size: 11px; line-height: 29px; }
.design { width: 70px; padding-left: 13px; }
.others { flex: 1; border: solid #d4d4d4; border-width: 0 0 1px 1px; border-bottom-left-radius: 3px; color: #aaa; display: flex; justify-content: space-between; padding: 0 13px 0 14px; letter-spacing: 1.150px; }
.group { padding: 0 14px 0 12px; border-bottom: 1px solid #e2e2e2; }
h2 { margin: 0; font-size: 11px; font-weight: 400; line-height: 16px; letter-spacing: 1.100px; }
.g1 { height: 121px; padding-top: 17px; }
.g2 { height: 121px; padding-top: 17px; }
.g3 { border: 0; padding-top: 17px; }
.colorrow { display: flex; align-items: center; margin-top: 15px; height: 24px; }
.color { width: 126px; height: 24px; border: 1px solid #ccc; border-radius: 2px; display: flex; line-height: 23px; }
.color i { width: 23px; border-right: 1px solid #ccc; background: #e5e5e5; }
.color span { margin-left: 4px; }
.pct { width: 42px; height: 24px; border: 1px solid #ccc; border-radius: 2px; margin: 0 12px 0 6px; padding-left: 4px; line-height: 23px; letter-spacing: .1px; }
.option { display: flex; align-items: center; height: 24px; margin-top: 12px; }
.option > svg { width: 14px; height: 14px; margin-right: 6px; }
.option > span { padding-top: 1px; letter-spacing: 0; }
.g2 .option { margin-top: 15px; }
.g2 .option.grid { margin-top: 12px; }
.select { width: 42px; height: 24px; margin-left: auto; border: 1px solid #ccc; border-radius: 2px; color: #ccc; display: flex; align-items: center; justify-content: space-between; padding: 0 6px 0 5px; margin-right: -2px; }
.exporthead { display: flex; align-items: center; justify-content: space-between; padding-right: 5px; }
.g3 p { margin: 20px 0 0; color: #aaa; letter-spacing: 0; }
.help { position: absolute; right: 12px; bottom: 12px; width: 36px; height: 36px; border-radius: 50%; background: #2c2c2c; display: flex; align-items: center; justify-content: center; }

.downloads { height: 49px; flex: none; display: flex; align-items: center; background: #f2f2f2; border-top: 1px solid #ccc; font: 13px/18px "Open Sans", sans-serif; color: #222; letter-spacing: -.3px; }
.doc { width: 13px; height: 17px; margin: -1px 0 0 22px; }
.filename { margin: 4px 0 0 14px; width: 153px; }
.up { width: 10px; height: 7px; }
.divider { width: 1px; height: 36px; margin-left: 18px; background: #c2c2c2; }
.showall { width: 78px; height: 28px; margin: -2px 0 0 1021px; border: 1px solid #777; border-radius: 3px; background: #fff; text-align: center; line-height: 26px; }
.closebar { width: 12px; height: 12px; margin: -2px 0 0 12px; }

.taskbar { height: 40px; flex: none; display: flex; background: linear-gradient(90deg, #000 400px, #191714 440px, #15120f 900px, #211f1c 1000px, #030303 1080px, #0d0a07 1180px, #000 1260px); border-top: 1px solid #000; }
.start { width: 48px; padding: 11px 0 0 16px; border-right: 5px solid #1e1e1e; }
.search { width: 344px; background: #333; color: #a0a0a0; font: 14.500px/39px "Open Sans", sans-serif; padding-left: 12px; letter-spacing: -.1px; }
.apps { display: flex; width: 745px; }
.app { width: 46px; height: 39px; flex: none; display: flex; justify-content: center; padding-top: 8px; position: relative; }
.app:nth-child(-n+7) { width: 46.800px; }
.app:first-child { width: 49.500px; }
.app svg { width: 23px; height: 23px; overflow: visible; }
.app:first-child svg { width: 24px; height: 24px; margin: -1px 2px 0 0; }
.run::after { content: ""; position: absolute; left: 4px; right: 4px; bottom: 0; height: 2px; background: #76b9ed; }
.group2::after { border-right: 8px solid #4b7291; }
.current { background: #4d4b49; }
.current::after { left: 0; right: 0; }
.tray { width: 140px; height: 24px; margin: 7px 0 0 3px; }
.clock { flex: 1; margin-right: 3px; border-right: 1px solid #555; color: #fff; font: 12px/18px "Open Sans", sans-serif; letter-spacing: -.3px; text-align: center; }
```
